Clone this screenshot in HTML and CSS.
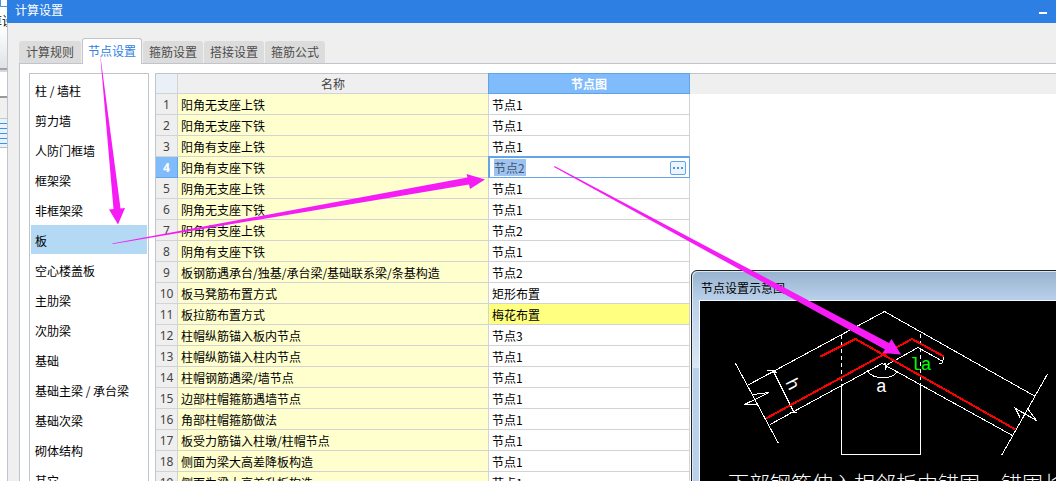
FILE: index.html
```html
<!DOCTYPE html>
<html lang="zh-CN">
<head>
<meta charset="utf-8">
<title>计算设置</title>
<link rel="stylesheet" href="styles.css">
</head>
<body>
<div class="app">
  <aside class="backdrop" aria-hidden="true">
    <div class="backdrop-ribbon"><span class="backdrop-icon"></span><span class="backdrop-label">算设</span></div>
    <div class="backdrop-row"></div>
    <div class="backdrop-gap"></div>
    <div class="backdrop-lines"></div>
    <div class="backdrop-rest"></div>
  </aside>

  <section class="dialog">
    <header class="titlebar">
      <h1 class="title">计算设置</h1>
      <button class="minimize" type="button" aria-label="最小化"></button>
    </header>

    <div class="tabs" role="tablist">
      <button class="tab" type="button" role="tab">计算规则</button>
      <button class="tab tab-active" type="button" role="tab" aria-selected="true">节点设置</button>
      <button class="tab" type="button" role="tab">箍筋设置</button>
      <button class="tab" type="button" role="tab">搭接设置</button>
      <button class="tab" type="button" role="tab">箍筋公式</button>
    </div>

    <div class="panel">
      <nav class="categories">
        <button class="category" type="button">柱 / 墙柱</button>
        <button class="category" type="button">剪力墙</button>
        <button class="category" type="button">人防门框墙</button>
        <button class="category" type="button">框架梁</button>
        <button class="category" type="button">非框架梁</button>
        <button class="category category-active" type="button">板</button>
        <button class="category" type="button">空心楼盖板</button>
        <button class="category" type="button">主肋梁</button>
        <button class="category" type="button">次肋梁</button>
        <button class="category" type="button">基础</button>
        <button class="category" type="button">基础主梁 / 承台梁</button>
        <button class="category" type="button">基础次梁</button>
        <button class="category" type="button">砌体结构</button>
        <button class="category" type="button">其它</button>
      </nav>

      <div class="grid-area">
        <table class="grid">
          <colgroup><col class="col-no"><col class="col-name"><col class="col-node"></colgroup>
          <thead>
            <tr><th class="corner"></th><th>名称</th><th class="head-active">节点图</th></tr>
          </thead>
          <tbody>
            <tr><th>1</th><td>阳角无支座上铁</td><td>节点1</td></tr>
            <tr><th>2</th><td>阳角无支座下铁</td><td>节点1</td></tr>
            <tr><th>3</th><td>阳角有支座上铁</td><td>节点1</td></tr>
            <tr class="row-active"><th>4</th><td>阳角有支座下铁</td><td class="cell-edit"><div class="editor"><input class="editor-input" type="text" value="节点2" aria-label="节点图"><button class="editor-more" type="button" aria-label="选择节点"><i></i><i></i><i></i></button></div></td></tr>
            <tr><th>5</th><td>阴角无支座上铁</td><td>节点1</td></tr>
            <tr><th>6</th><td>阴角无支座下铁</td><td>节点1</td></tr>
            <tr><th>7</th><td>阴角有支座上铁</td><td>节点2</td></tr>
            <tr><th>8</th><td>阴角有支座下铁</td><td>节点1</td></tr>
            <tr><th>9</th><td>板钢筋遇承台/独基/承台梁/基础联系梁/条基构造</td><td>节点2</td></tr>
            <tr><th>10</th><td>板马凳筋布置方式</td><td>矩形布置</td></tr>
            <tr><th>11</th><td>板拉筋布置方式</td><td class="cell-changed">梅花布置</td></tr>
            <tr><th>12</th><td>柱帽纵筋锚入板内节点</td><td>节点3</td></tr>
            <tr><th>13</th><td>柱帽纵筋锚入柱内节点</td><td>节点1</td></tr>
            <tr><th>14</th><td>柱帽钢筋遇梁/墙节点</td><td>节点1</td></tr>
            <tr><th>15</th><td>边部柱帽箍筋遇墙节点</td><td>节点1</td></tr>
            <tr><th>16</th><td>角部柱帽箍筋做法</td><td>节点1</td></tr>
            <tr><th>17</th><td>板受力筋锚入柱墩/柱帽节点</td><td>节点1</td></tr>
            <tr><th>18</th><td>侧面为梁大高差降板构造</td><td>节点1</td></tr>
            <tr><th>19</th><td>侧面为梁大高差升板构造</td><td>节点1</td></tr>
          </tbody>
        </table>
      </div>
    </div>
  </section>

  <section class="preview">
    <h2 class="preview-title">节点设置示意图</h2>
    <div class="preview-body">
      <svg class="diagram" viewBox="700 301 420 200" width="420" height="200" role="img" aria-label="节点设置示意图">
        <g class="thin" shape-rendering="crispEdges">
          <path d="M748 385L884.500 311.500L1034.500 396"/>
          <path d="M770 424.500L882 363.500L1012.500 435.500"/>
          <path d="M735.500 363.500L778.500 443.500"/>
          <path d="M1047.500 374L1001.500 455.500"/>
          <path d="M753 394.500L769 392.500L744.500 404.500H758"/>
          <path d="M1020 417.500L1015.500 408.500L1036.500 420.500L1028 409"/>
          <path d="M748 385L773.500 371.500L793.500 411.500M767 370.500H773.500L777 373M790 412H796.500"/>
          <path d="M841.500 385V454.500H920.500V385"/>
          <path stroke-dasharray="4 3" d="M841.500 335V385M920.500 334V385"/>
          <path d="M885 366L918 347.500L943 361.500M884 363L887 368M885 370L886 363M939 363H942L944 357"/>
          <path d="M867.500 370.500C872 380 893 380 897.500 371"/>
        </g>
        <g class="bar" shape-rendering="crispEdges">
          <path d="M766 418.500L912 339L944 356.500"/>
          <path d="M820.500 356.500L855.500 339L1015.500 429.500"/>
        </g>
        <text class="mark" x="876" y="392">a</text>
        <text class="mark mark-green" x="910" y="370">la</text>
        <text class="mark" transform="translate(785 382) rotate(63)">h</text>
        <text class="note" x="728" y="491">下部钢筋伸入相邻板中锚固，锚固长度</text>
      </svg>
    </div>
  </section>

  <svg class="arrows" width="1056" height="481" viewBox="0 0 1056 481" aria-hidden="true">
    <path d="M100 53L120.500 208.500L125 208L118 224.500L109 209.500L113.500 209Z"/>
    <path d="M112 243.500L467.500 177.500L466.500 174L485 179.500L470 189L469 184.500L113 244Z"/>
    <path d="M554.500 166L889 343L891.500 339L901 354.500L882.500 353L885 349.500L554 167Z"/>
  </svg>
</div>
</body>
</html>
```
FILE: styles.css
```css
* { box-sizing: border-box; }

body {
  margin: 0;
  background: #fff;
  color: #000;
  font: 12px/20px "Noto Sans CJK SC", "Noto Sans", sans-serif;
}

button, input { font: inherit; color: inherit; padding: 0; border: 0; background: none; }
h1, h2 { margin: 0; font-size: 12px; font-weight: 400; }

.app { position: relative; display: flex; height: 100vh; overflow: hidden; }

.backdrop { display: flex; flex-direction: column; flex: 0 0 7px; overflow: hidden; }
.backdrop-ribbon {
  height: 70px;
  border-bottom: 2px solid #a0a4a8;
  background: linear-gradient(#fff 40%, #dfe2e5);
}
.backdrop-icon { display: block; height: 7px; border: solid #4a95e0; border-width: 0 0 1px 1px; }
.backdrop-label { display: flex; justify-content: flex-end; margin-top: 4px; width: 14px; white-space: nowrap; }
.backdrop-row { height: 28px; border-top: 2px solid #d8d8d8; border-bottom: 2px solid #9a9a9a; background: #fff; }
.backdrop-gap { height: 21px; border-bottom: 1px solid #c8c8c8; background: #f0f0f0; }
.backdrop-lines {
  height: 29px;
  border-bottom: 1px solid #b8bcc0;
  background: repeating-linear-gradient(#e8f3fd 0 4px, #3f92e4 4px 5px);
}
.backdrop-rest { flex: 1; background: #fff; }

.dialog {
  display: flex;
  flex: 1;
  flex-direction: column;
  min-width: 0;
  background: #efefef;
}
.titlebar {
  display: flex;
  flex: none;
  height: 23px;
  align-items: center;
  justify-content: space-between;
  padding: 0 9px 4px 8px;
  background: #2d7fe3;
  color: #fff;
}
.title { line-height: 18px; }
.minimize { width: 8px; height: 8px; border-bottom: 2px solid #fff; }

.tabs {
  display: flex;
  align-items: flex-end;
  gap: 1px;
  flex: 0 0 41px;
  padding-left: 11px;
  border-left: 1px solid #c0c4cc;
  position: relative;
  z-index: 1;
}
.tab {
  width: 60px;
  height: 22px;
  margin-bottom: 1px;
  border-radius: 3px 3px 0 0;
  background: #dcdcdc;
  color: #4c4c4c;
  text-align: center;
}
.tab:first-child { width: 62px; }
.tab-active {
  height: 26px;
  margin-bottom: 0;
  padding-bottom: 2px;
  border: 1px solid #c0c4cc;
  border-bottom: 0;
  background: #fff;
  color: #2d7fe3;
}

.panel {
  display: flex;
  flex: 1;
  gap: 6px;
  min-height: 0;
  margin-top: -1px;
  padding: 10px 0 0 21px;
  border-left: 1px solid #c0c4cc;
  background:
    linear-gradient(#c0c4cc, #c0c4cc) 11px 0 / 100% 1px no-repeat,
    linear-gradient(90deg, #efefef 11px, #c0c4cc 11px 12px, #fff 12px);
}

.categories {
  display: flex;
  flex: 0 0 120px;
  flex-direction: column;
  gap: 1px;
  padding: 1px;
  border: 1px solid #c0c4cc;
  border-bottom: 0;
  overflow: hidden;
}
.category { flex: 0 0 29px; padding: 2px 4px 0; text-align: left; white-space: nowrap; }
.category-active { background: #b3d9f5; }

.grid-area {
  flex: 1;
  min-width: 0;
  overflow: hidden;
  border-left: 1px solid #c0c4cc;
  background: linear-gradient(#c0c4cc 1px, #efefef 1px 21px, #fff 21px);
}
.grid { width: 534px; border-spacing: 0; table-layout: fixed; }
.col-no { width: 22px; }
.col-name { width: 311px; }
.col-node { width: 201px; }
.grid th, .grid td {
  height: 21px;
  padding: 2px 0 0 3px;
  border: solid #d3d3d3;
  border-width: 0 1px 1px 0;
  line-height: 18px;
  text-align: left;
  white-space: nowrap;
}
.grid th { padding: 2px 0 0; background: #efefef; color: #444; font-weight: 400; text-align: center; }
.grid thead th { border-top: 1px solid #c0c4cc; padding-top: 1px; }
.grid .corner { background: #eaf0f8; }
.grid .head-active { border-color: #5ea4e8; background: #80bbfb; color: #fff; font-weight: 700; box-shadow: -1px 0 #5ea4e8; }
.grid tbody th { font-family: "Noto Sans", sans-serif; }
.grid td:nth-child(2) { background: #ffffce; }
.grid .row-active th { background: #80bbfb; color: #fff; font-weight: 700; border-color: #5ea4e8; }
.grid .cell-changed { background: #ffff80; }
.grid .cell-edit { padding: 0; border: 0; }

.editor {
  display: flex;
  align-items: center;
  gap: 4px;
  height: 21px;
  padding: 0 4px 0 5px;
  background: #fff;
  box-shadow: inset 0 0 0 1px #64a5e8, -1px -1px #64a5e8, 0 -1px #64a5e8, -1px 0 #64a5e8;
}
.editor-input {
  flex: 1;
  min-width: 0;
  height: 17px;
  background: linear-gradient(#9fc3f0, #9fc3f0) 0 0 / 32px 17px no-repeat;
  color: #43566e;
}
.editor-more {
  display: flex;
  align-items: center;
  justify-content: center;
  gap: 2px;
  width: 16px;
  height: 14px;
  border: 1px solid #5ea4e8;
  border-radius: 2px;
  background: #edf5fc;
}
.editor-more i { width: 2px; height: 2px; background: #4b94d8; }

.preview {
  position: absolute;
  left: 691px;
  right: -20px;
  top: 270px;
  bottom: -20px;
  display: flex;
  flex-direction: column;
  padding-left: 7px;
  border: 1px solid #222;
  border-radius: 6px 0 0 0;
  background:
    linear-gradient(#97b2cf, #b9d0ea 29px, transparent 29px),
    linear-gradient(#b9d0ea 29px, #d9e7f6 97px, #b9d1ea 97px);
  box-shadow: inset 1px 1px #dce8f4;
}
.preview-title { padding: 7px 0 2px 2px; }
.preview-body { flex: 1; overflow: hidden; border: solid #f4f8fc; border-width: 1px 0 0 1px; background: #000; }
.diagram { display: block; }
.diagram path { fill: none; }
.thin path { stroke: #fff; stroke-width: 1; }
.bar path { stroke: #f00; stroke-width: 2; }
.mark { fill: #fff; font: 18px "Liberation Mono", monospace; }
.mark-green { fill: #0f0; }
.note { fill: #fff; font: 300 21px "Noto Sans CJK SC", sans-serif; }

.arrows { position: absolute; z-index: 2; left: 0; top: 0; fill: #f51cf5; pointer-events: none; }
```
